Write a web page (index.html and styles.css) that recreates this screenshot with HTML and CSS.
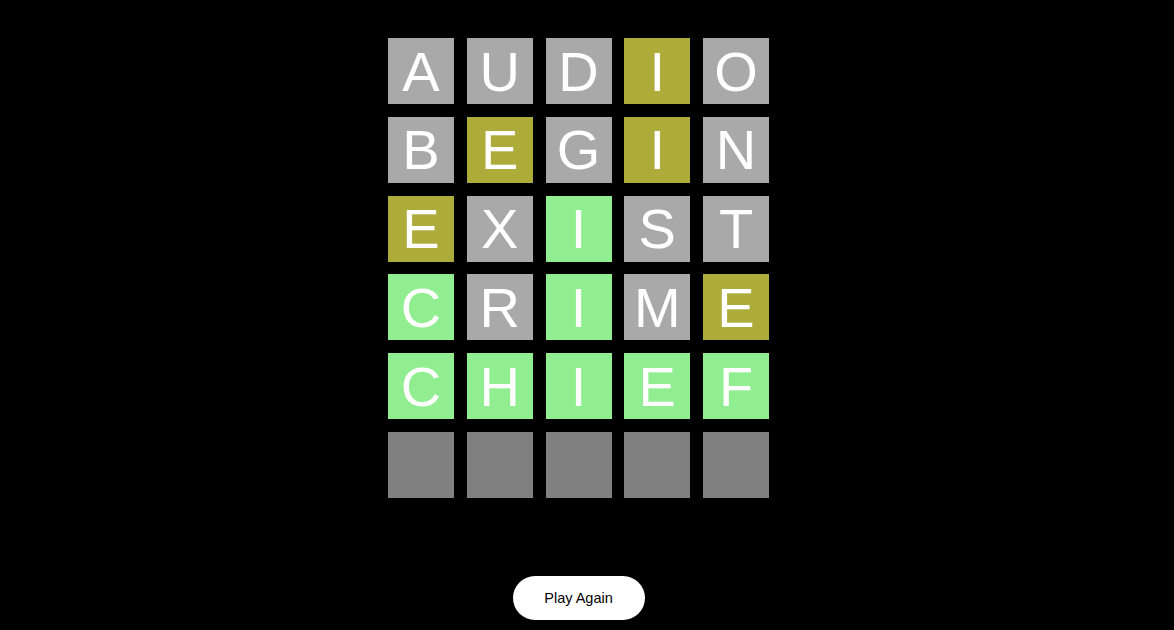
FILE: index.html
```html
<!DOCTYPE html>
<html>
<head>
<meta charset="utf-8">
<link rel="stylesheet" href="styles.css">
</head>
<body>
<div class="app">
  <div class="board">
    <div class="tile absent">A</div><div class="tile absent">U</div><div class="tile absent">D</div><div class="tile present">I</div><div class="tile absent">O</div>
    <div class="tile absent">B</div><div class="tile present">E</div><div class="tile absent">G</div><div class="tile present">I</div><div class="tile absent">N</div>
    <div class="tile present">E</div><div class="tile absent">X</div><div class="tile correct">I</div><div class="tile absent">S</div><div class="tile absent">T</div>
    <div class="tile correct">C</div><div class="tile absent">R</div><div class="tile correct">I</div><div class="tile absent">M</div><div class="tile present">E</div>
    <div class="tile correct">C</div><div class="tile correct">H</div><div class="tile correct">I</div><div class="tile correct">E</div><div class="tile correct">F</div>
    <div class="tile empty"></div><div class="tile empty"></div><div class="tile empty"></div><div class="tile empty"></div><div class="tile empty"></div>
  </div>
  <button class="again">Play Again</button>
</div>
</body>
</html>
```
FILE: styles.css
```css
html, body {
  margin: 0;
  padding: 0;
  background: #000;
  height: 100%;
  overflow: hidden;
}
.app {
  width: calc(100% - 17px);
  display: flex;
  flex-direction: column;
  align-items: center;
  padding-top: 38px;
  font-family: "Liberation Sans", Arial, sans-serif;
}
.board {
  display: grid;
  grid-template-columns: repeat(5, 66px);
  grid-auto-rows: 66px;
  column-gap: 12.75px;
  row-gap: 12.8px;
}
.tile {
  display: flex;
  align-items: center;
  justify-content: center;
  color: #fff;
  font-size: 56px;
  line-height: normal;
}
.absent { background: #a9a9a9; }
.present { background: #adab39; }
.correct { background: #90ee90; }
.empty { background: #808080; }
.again {
  margin-top: 78px;
  background: #fff;
  color: #000;
  border: none;
  border-radius: 22px;
  width: 132px;
  height: 44px;
  font-family: "Liberation Sans", Arial, sans-serif;
  font-size: 14.5px;
  padding: 0;
}
```
